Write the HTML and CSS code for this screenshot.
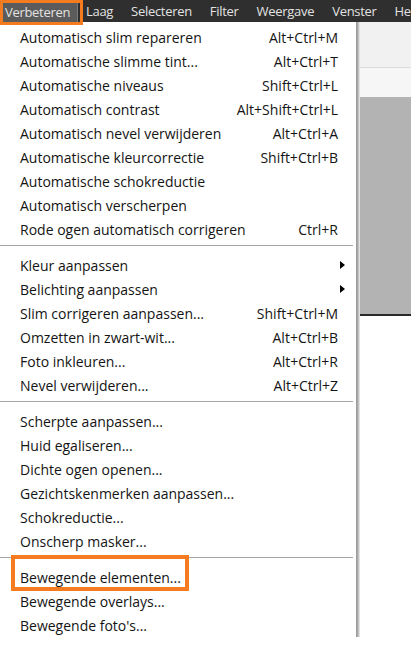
FILE: index.html
```html
<!DOCTYPE html>
<html lang="nl">
<head>
<meta charset="utf-8">
<link rel="stylesheet" href="styles.css">
</head>
<body>
<div class="app">
  <nav class="menubar">
    <span class="mb-active"><span class="mb-label">Verbeteren</span></span>
    <span class="mb-item first">Laag</span>
    <span class="mb-item">Selecteren</span>
    <span class="mb-item">Filter</span>
    <span class="mb-item">Weergave</span>
    <span class="mb-item">Venster</span>
    <span class="mb-item">Help</span>
  </nav>
  <div class="workspace">
    <div class="band band-a"></div>
    <div class="band band-b"></div>
    <div class="band band-c"></div>
  </div>
  <div class="menu">
    <div class="group">
      <div class="row"><span>Automatisch slim repareren</span><span class="key">Alt+Ctrl+M</span></div>
      <div class="row"><span>Automatische slimme tint...</span><span class="key">Alt+Ctrl+T</span></div>
      <div class="row"><span>Automatische niveaus</span><span class="key">Shift+Ctrl+L</span></div>
      <div class="row"><span>Automatisch contrast</span><span class="key">Alt+Shift+Ctrl+L</span></div>
      <div class="row"><span>Automatisch nevel verwijderen</span><span class="key">Alt+Ctrl+A</span></div>
      <div class="row"><span>Automatische kleurcorrectie</span><span class="key">Shift+Ctrl+B</span></div>
      <div class="row"><span>Automatische schokreductie</span></div>
      <div class="row"><span>Automatisch verscherpen</span></div>
      <div class="row"><span>Rode ogen automatisch corrigeren</span><span class="key">Ctrl+R</span></div>
    </div>
    <div class="sep"></div>
    <div class="group">
      <div class="row"><span>Kleur aanpassen</span><span class="arrow"></span></div>
      <div class="row"><span>Belichting aanpassen</span><span class="arrow"></span></div>
      <div class="row"><span>Slim corrigeren aanpassen...</span><span class="key">Shift+Ctrl+M</span></div>
      <div class="row"><span>Omzetten in zwart-wit...</span><span class="key">Alt+Ctrl+B</span></div>
      <div class="row"><span>Foto inkleuren...</span><span class="key">Alt+Ctrl+R</span></div>
      <div class="row"><span>Nevel verwijderen...</span><span class="key">Alt+Ctrl+Z</span></div>
    </div>
    <div class="sep"></div>
    <div class="group">
      <div class="row"><span>Scherpte aanpassen...</span></div>
      <div class="row"><span>Huid egaliseren...</span></div>
      <div class="row"><span>Dichte ogen openen...</span></div>
      <div class="row"><span>Gezichtskenmerken aanpassen...</span></div>
      <div class="row"><span>Schokreductie...</span></div>
      <div class="row"><span>Onscherp masker...</span></div>
    </div>
    <div class="sep"></div>
    <div class="group">
      <div class="row"><span class="marked">Bewegende elementen...</span></div>
      <div class="row"><span>Bewegende overlays...</span></div>
      <div class="row"><span>Bewegende foto's...</span></div>
    </div>
  </div>
</div>
</body>
</html>
```
FILE: styles.css
```css
* { box-sizing: border-box; }
html, body { margin: 0; padding: 0; background: #ffffff; }
body { font-family: "Open Sans", "Noto Sans", sans-serif; overflow: hidden; }

.app { position: relative; width: 411px; height: 670px; overflow: hidden; }

.menubar {
  display: flex;
  align-items: flex-start;
  height: 22px;
  background: #2f2f2f;
  color: #e2e2e2;
  font-size: 13px;
  letter-spacing: -0.3px;
  white-space: nowrap;
}
.mb-item { padding: 0 9px; line-height: 23px; }
.mb-item.first { padding-left: 3px; }
.mb-active {
  position: relative;
  z-index: 3;
  flex: none;
  width: 83px;
  height: 25px;
  border: 3px solid #f47b20;
  background: #2f2f2f;
}
.mb-label {
  display: block;
  width: 75px;
  height: 19px;
  line-height: 18px;
  padding-left: 2px;
  background: #5b5b5b;
  border-right: 1px solid #7a7a7a;
}

.workspace { display: flex; flex-direction: column; }
.band-a { height: 46px; background: #f1f1f1; border-bottom: 1px solid #dcdcdc; }
.band-b { height: 29px; background: #f6f6f6; }
.band-c { height: 219px; background: #b3b3b3; border-bottom: 2px solid #2a2a2a; }

.menu {
  position: absolute;
  top: 22px;
  left: 0;
  width: 356px;
  padding-top: 3px;
  background: #ffffff;
  color: #141414;
  font-size: 14px;
  box-shadow: 1px 0 0 #9c9c9c, 2px 0 0 #a9a9a9, 3px 0 0 #c4c4c4, 4px 0 0 #e2e2e2;
  z-index: 2;
}
.row {
  display: flex;
  justify-content: space-between;
  align-items: center;
  height: 24px;
  padding: 0 18px 0 20px;
  white-space: nowrap;
}
.key { text-align: right; }
.arrow {
  width: 0; height: 0;
  margin-right: -7px;
  border-top: 4px solid transparent;
  border-bottom: 4px solid transparent;
  border-left: 5px solid #000;
}
.sep { height: 1px; background: #a6a6a6; margin: 4px 3px 7px 0; }
.marked {
  position: relative;
  z-index: 1;
}
.marked::before {
  content: "";
  position: absolute;
  left: -9px; right: -8px; top: -13px; bottom: -4px;
  border: 4px solid #f47b20;
}
```
